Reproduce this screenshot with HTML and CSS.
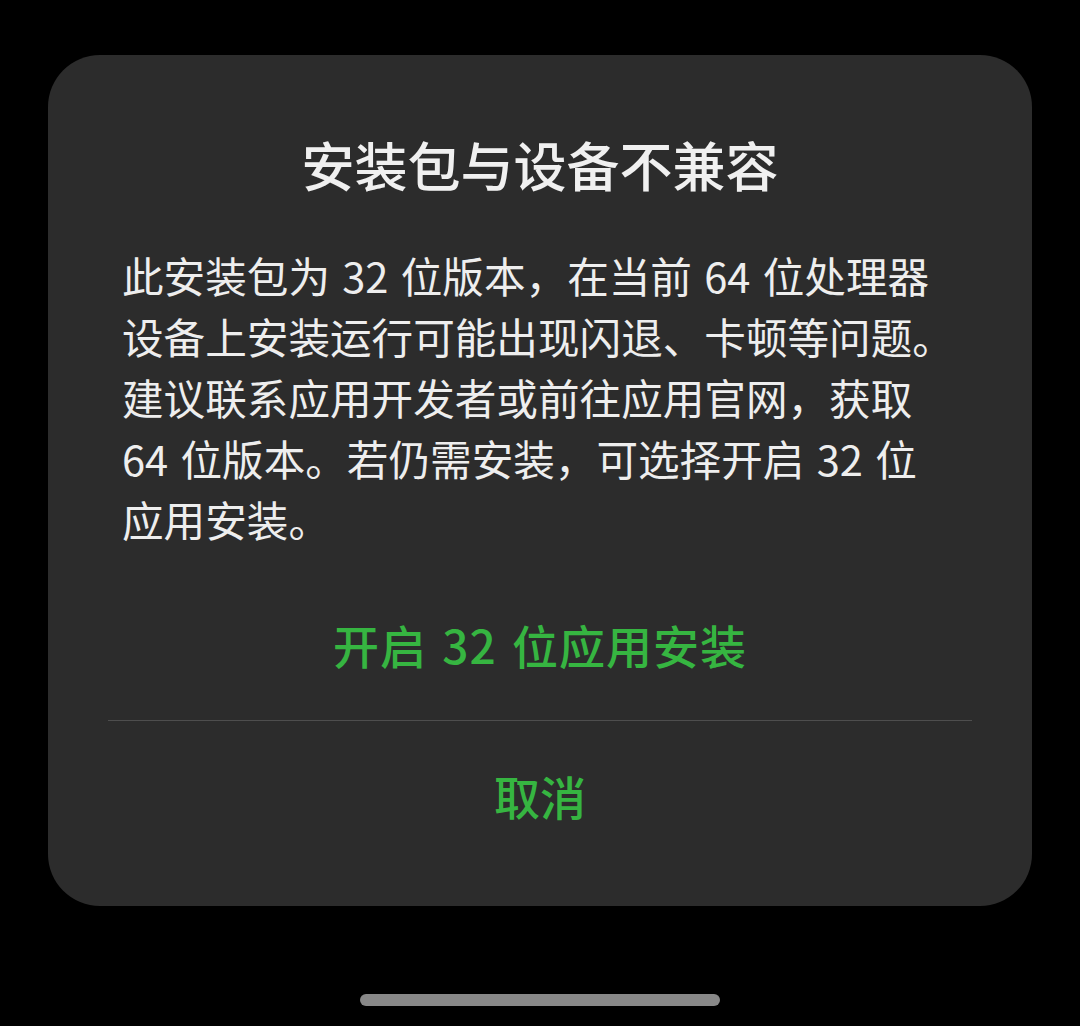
FILE: index.html
```html
<!DOCTYPE html>
<html lang="zh-CN">
<head>
    <meta charset="UTF-8">
    <meta name="viewport" content="width=device-width, initial-scale=1.0">
    <title>安装包与设备不兼容</title>
    <link rel="stylesheet" href="styles.css">
</head>
<body>
    <div class="screen">
        <div class="dialog">
            <h1 class="dialog-title">安装包与设备不兼容</h1>
            <p class="dialog-message">此安装包为 32 位版本，在当前 64 位处理器<br>设备上安装运行可能出现闪退、卡顿等问题。<br>建议联系应用开发者或前往应用官网，获取<br>64 位版本。若仍需安装，可选择开启 32 位<br>应用安装。</p>
            <div class="dialog-actions">
                <button class="action action-primary">开启 32 位应用安装</button>
                <div class="divider"></div>
                <button class="action action-cancel">取消</button>
            </div>
        </div>
        <div class="home-indicator"></div>
    </div>
</body>
</html>
```

FILE: styles.css
```css
html, body {
    margin: 0;
    padding: 0;
    background: #000;
    overflow: hidden;
}

body {
    font-family: "Noto Sans CJK SC", "Noto Sans", sans-serif;
    color: #efefef;
}

.screen {
    height: 1026px;
    padding-top: 55px;
    box-sizing: border-box;
    display: flex;
    flex-direction: column;
    align-items: center;
}

.dialog {
    width: 984px;
    box-sizing: border-box;
    background: #2c2c2c;
    border-radius: 52px;
    padding: 74px 74px 31px;
}

.dialog-title {
    margin: 0;
    font-size: 53px;
    line-height: 70px;
    font-weight: 500;
    text-align: center;
    color: #f0f0f0;
}

.dialog-message {
    margin: 46px 0 0;
    font-size: 41.6px;
    line-height: 61px;
    word-spacing: 3px;
    white-space: nowrap;
    color: #eeeeee;
}

.dialog-actions {
    margin: 24px -14px 0;
    display: flex;
    flex-direction: column;
}

.action {
    background: none;
    border: none;
    padding: 0 0 6px;
    font-family: inherit;
    font-size: 46px;
    font-weight: 500;
    color: #36b541;
    cursor: pointer;
}

.action-primary {
    height: 146px;
    letter-spacing: 1px;
    word-spacing: 4px;
}

.action-cancel {
    height: 154px;
}

.divider {
    height: 1px;
    background: #4e4e4e;
}

.home-indicator {
    width: 360px;
    height: 12px;
    margin-top: 88px;
    border-radius: 6px;
    background: #888888;
}
```
